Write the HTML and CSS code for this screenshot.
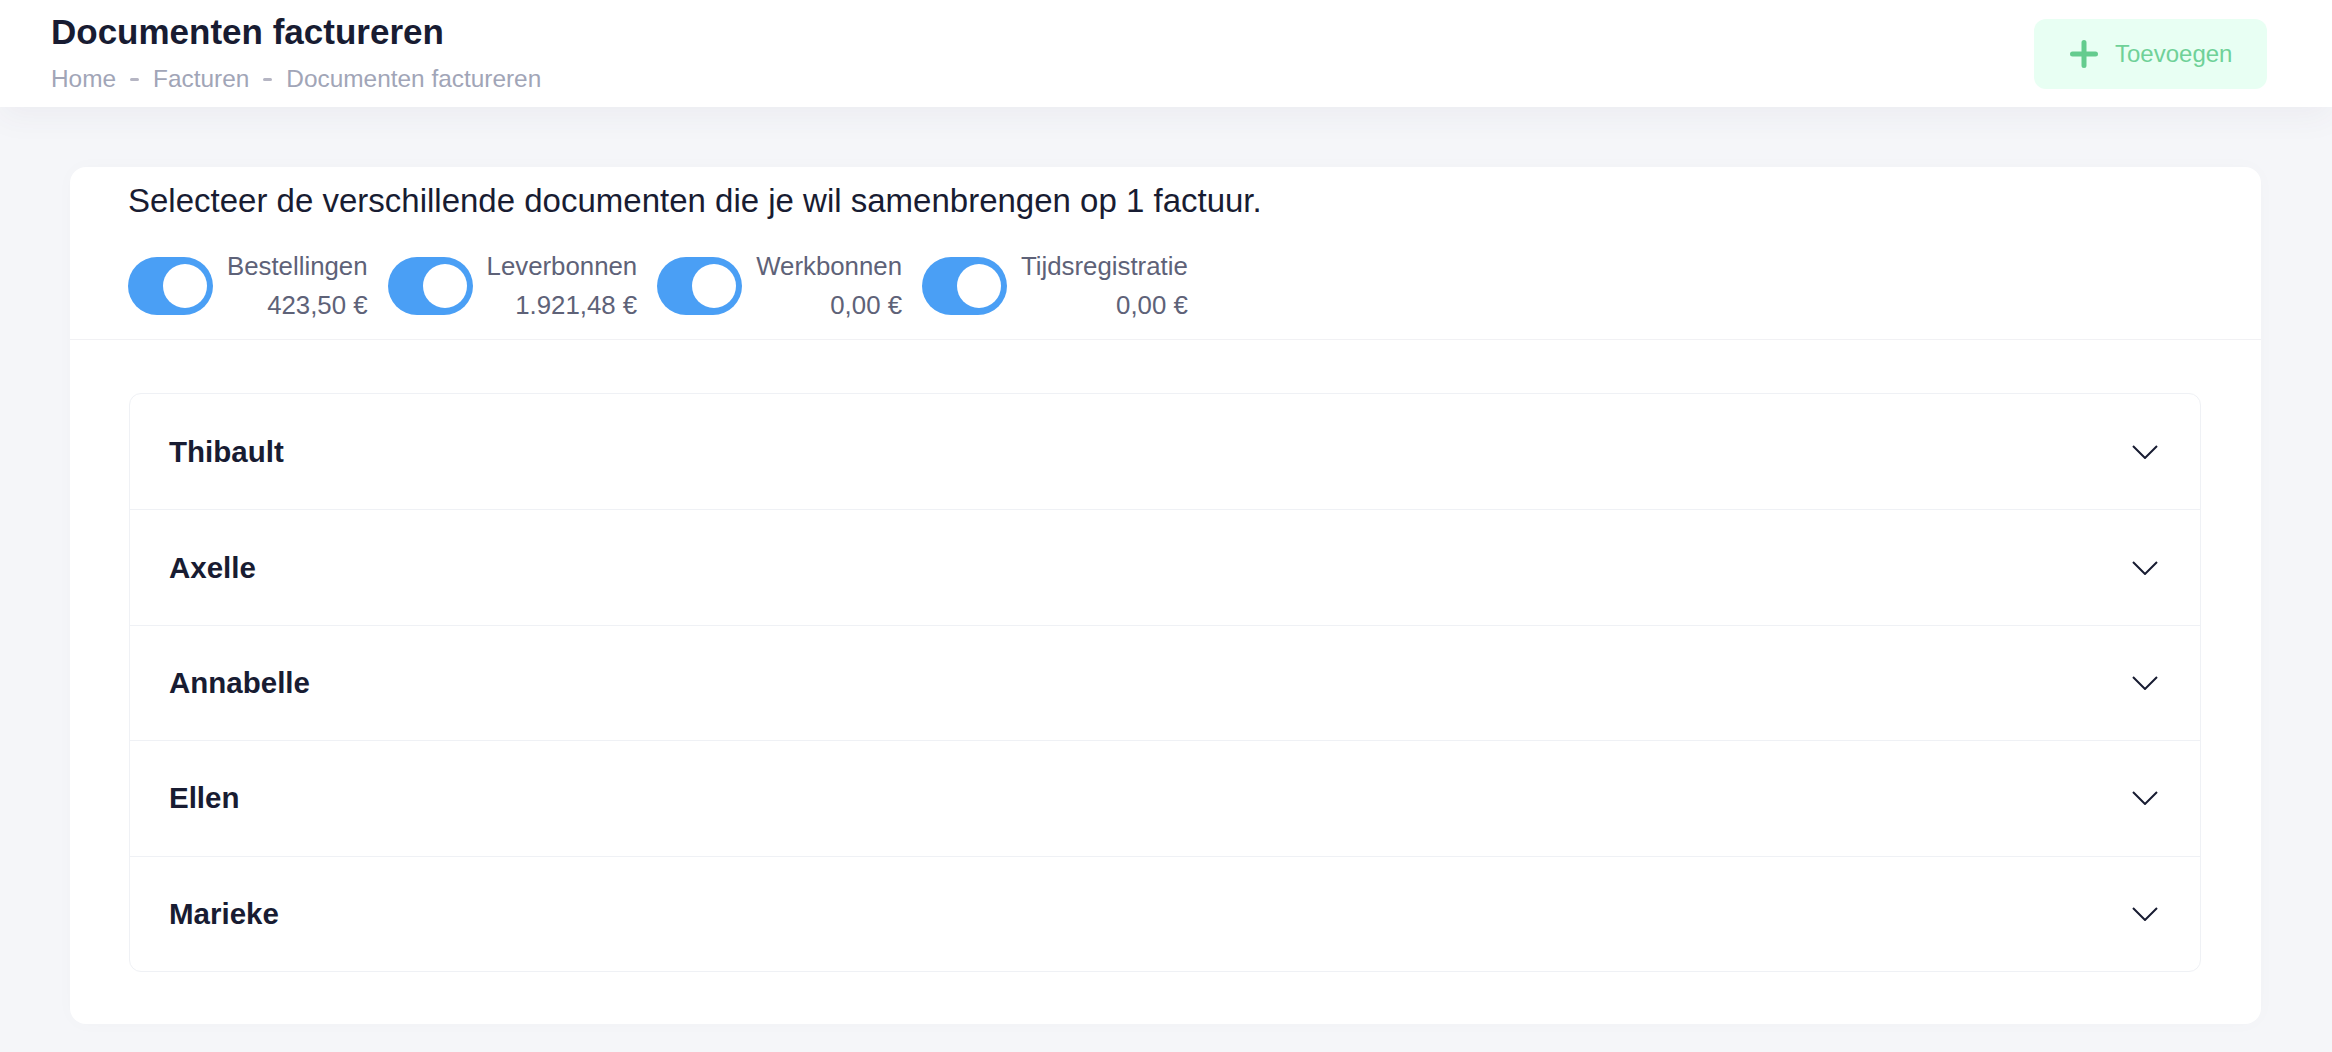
FILE: index.html
```html
<!DOCTYPE html>
<html lang="nl">
<head>
    <meta charset="UTF-8">
    <meta name="viewport" content="width=device-width, initial-scale=1.0">
    <title>Documenten factureren</title>
    <link rel="stylesheet" href="styles.css">
</head>
<body>
    <header class="toolbar">
        <div class="page-title">
            <h1>Documenten factureren</h1>
            <ul class="breadcrumb">
                <li>Home</li>
                <li class="sep"></li>
                <li>Facturen</li>
                <li class="sep"></li>
                <li>Documenten factureren</li>
            </ul>
        </div>
        <button class="btn-add">
            <svg width="28" height="28" viewBox="0 0 28 28">
                <path d="M14 2.5v23M2.5 14h23" stroke="currentColor" stroke-width="5" stroke-linecap="round" fill="none"/>
            </svg>
            Toevoegen
        </button>
    </header>

    <main class="content">
        <div class="card">
            <div class="card-header">
                <p class="intro">Selecteer de verschillende documenten die je wil samenbrengen op 1 factuur.</p>
                <div class="switches">
                    <label class="switch-item">
                        <span class="switch"><span class="knob"></span></span>
                        <span class="switch-text">
                            <span>Bestellingen</span>
                            <span>423,50 €</span>
                        </span>
                    </label>
                    <label class="switch-item">
                        <span class="switch"><span class="knob"></span></span>
                        <span class="switch-text">
                            <span>Leverbonnen</span>
                            <span>1.921,48 €</span>
                        </span>
                    </label>
                    <label class="switch-item">
                        <span class="switch"><span class="knob"></span></span>
                        <span class="switch-text">
                            <span>Werkbonnen</span>
                            <span>0,00 €</span>
                        </span>
                    </label>
                    <label class="switch-item">
                        <span class="switch"><span class="knob"></span></span>
                        <span class="switch-text">
                            <span>Tijdsregistratie</span>
                            <span>0,00 €</span>
                        </span>
                    </label>
                </div>
            </div>

            <div class="card-body">
                <div class="accordion">
                    <div class="acc-row">
                        <span class="acc-name">Thibault</span>
                        <svg class="chevron" width="26" height="14" viewBox="0 0 26 14"><polyline points="1,1 13,13 25,1"/></svg>
                    </div>
                    <div class="acc-row">
                        <span class="acc-name">Axelle</span>
                        <svg class="chevron" width="26" height="14" viewBox="0 0 26 14"><polyline points="1,1 13,13 25,1"/></svg>
                    </div>
                    <div class="acc-row">
                        <span class="acc-name">Annabelle</span>
                        <svg class="chevron" width="26" height="14" viewBox="0 0 26 14"><polyline points="1,1 13,13 25,1"/></svg>
                    </div>
                    <div class="acc-row">
                        <span class="acc-name">Ellen</span>
                        <svg class="chevron" width="26" height="14" viewBox="0 0 26 14"><polyline points="1,1 13,13 25,1"/></svg>
                    </div>
                    <div class="acc-row">
                        <span class="acc-name">Marieke</span>
                        <svg class="chevron" width="26" height="14" viewBox="0 0 26 14"><polyline points="1,1 13,13 25,1"/></svg>
                    </div>
                </div>
            </div>
        </div>
    </main>
</body>
</html>
```

FILE: styles.css
```css
* {
    box-sizing: border-box;
}

body {
    margin: 0;
    font-family: "Liberation Sans", Arial, sans-serif;
    background-color: #f5f6f9;
    color: #181c32;
}

/* top toolbar */
.toolbar {
    height: 107px;
    background-color: #fff;
    display: flex;
    justify-content: space-between;
    align-items: center;
    padding: 0 65px 0 51px;
    box-shadow: 0 10px 30px 0 rgba(82, 63, 105, 0.05);
    position: relative;
}

.page-title {
    align-self: flex-start;
    padding-top: 12px;
}

.page-title h1 {
    margin: 0 0 13px 0;
    font-size: 35px;
    line-height: 40px;
    font-weight: 700;
    color: #181c32;
}

.breadcrumb {
    list-style: none;
    margin: 0;
    padding: 0;
    display: flex;
    align-items: center;
    gap: 14px;
    font-size: 24.4px;
    line-height: 28px;
    color: #a1a5b7;
}

.breadcrumb .sep {
    width: 9px;
    height: 3px;
    border-radius: 2px;
    background-color: #b5b5c3;
}

.btn-add {
    height: 70px;
    width: 233px;
    border: none;
    border-radius: 12px;
    background-color: #e8fff3;
    color: #6fd198;
    font-family: inherit;
    font-size: 24px;
    display: flex;
    align-items: center;
    gap: 17px;
    padding: 0 35px 0 36px;
    cursor: pointer;
}

.btn-add svg {
    color: #64cc8e;
    flex-shrink: 0;
}

/* page content */
.content {
    padding: 60px 71px 28px 70px;
}

.card {
    background-color: #fff;
    border-radius: 16px;
    box-shadow: 0 0 20px 0 rgba(76, 87, 125, 0.02);
}

.card-header {
    padding: 15px 58px 14px 58px;
    border-bottom: 1px solid #f1f1f4;
}

.intro {
    margin: 0 0 27px 0;
    font-size: 33px;
    line-height: 38px;
    color: #181c32;
}

.switches {
    display: flex;
    align-items: center;
    gap: 20px;
}

.switch-item {
    display: flex;
    align-items: center;
    gap: 14px;
    cursor: pointer;
}

.switch {
    width: 85px;
    height: 58px;
    border-radius: 29px;
    background-color: #4a9ff5;
    display: flex;
    align-items: center;
    justify-content: flex-end;
    padding: 0 6px;
}

.knob {
    width: 44px;
    height: 44px;
    border-radius: 50%;
    background-color: #fff;
}

.switch-text {
    display: flex;
    flex-direction: column;
    align-items: flex-end;
    font-size: 25.8px;
    line-height: 39px;
    color: #5e6278;
}

.card-body {
    padding: 53px 60px 52px 59px;
}

.accordion {
    border: 1px solid #eff1f5;
    border-radius: 12px;
}

.acc-row {
    height: 115.4px;
    display: flex;
    justify-content: space-between;
    align-items: center;
    padding: 0 42px 0 39px;
}

.acc-row + .acc-row {
    border-top: 1px solid #eff1f5;
}

.acc-name {
    font-size: 29.5px;
    font-weight: 700;
    color: #181c32;
}

.chevron polyline {
    fill: none;
    stroke: #181c32;
    stroke-width: 2;
}
```
